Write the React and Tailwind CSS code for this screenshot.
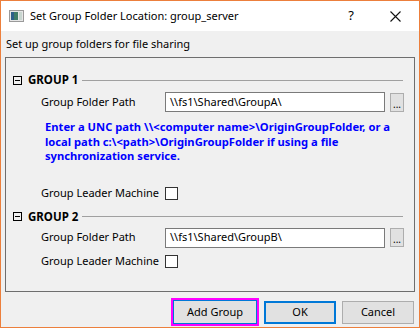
import React from "react";

function Box() {
  return (
    <div className="w-[9px] h-[9px] border border-black flex items-center justify-center mr-[6px] shrink-0">
      <div className="w-[5px] h-px bg-black" />
    </div>
  );
}

function GroupHeader({ title }) {
  return (
    <div className="flex items-center h-[14px] pl-[7px] pr-[11px]">
      <Box />
      <span className="font-bold text-[11.5px] leading-[14px] text-black whitespace-nowrap">{title}</span>
      <div className="flex-1 h-px bg-[#a0a0a0] ml-[4px]" />
    </div>
  );
}

function PathRow({ value }) {
  return (
    <div className="flex items-center h-[20px]">
      <span className="w-[124px] pl-[35px] box-content text-[11px] text-black whitespace-nowrap">Group Folder Path</span>
      <div className="w-[220px] h-[20px] border border-[#7a7a7a] bg-white flex items-center pl-[4px] text-[11px] text-black whitespace-nowrap">
        {value}
      </div>
      <div className="ml-[5px] w-[14px] h-[19px] border border-[#adadad] bg-[#e1e1e1] flex items-end justify-center text-[10px] leading-[14px] text-black">
        ...
      </div>
    </div>
  );
}

function LeaderRow() {
  return (
    <div className="flex items-center h-[14px]">
      <span className="w-[124px] pl-[35px] box-content text-[11px] text-black whitespace-nowrap">Group Leader Machine</span>
      <div className="w-[13px] h-[13px] border border-[#333] bg-white" />
    </div>
  );
}

export default function App() {
  return (
    <div
      className="w-[420px] h-[328px] border border-[#ec7f3c] flex flex-col bg-[#f0f0f0] overflow-hidden"
      style={{ fontFamily: '"Noto Sans", "Open Sans", sans-serif' }}
    >
      <div className="h-[30px] bg-white flex items-center shrink-0">
        <svg width="15" height="12" viewBox="0 0 15 12" className="ml-[8px] mr-[6px]">
          <rect x="0.5" y="0.5" width="14" height="11" fill="#e6e6e6" stroke="#9a9a9a" />
          <rect x="2" y="2" width="7" height="8" fill="#3f7c68" />
          <rect x="2" y="2" width="3" height="8" fill="#2d5f8a" />
          <rect x="10" y="2" width="3" height="8" fill="#c8d6d0" />
        </svg>
        <span className="text-[11px] text-black whitespace-nowrap">Set Group Folder Location: group_server</span>
        <span className="ml-auto mr-[36px] text-[13px] text-black">?</span>
        <svg width="11" height="11" viewBox="0 0 11 11" className="mr-[18px]">
          <path d="M0.5 0.5 L10.5 10.5 M10.5 0.5 L0.5 10.5" stroke="#111" strokeWidth="1.1" />
        </svg>
      </div>
      <div className="flex-1 flex flex-col px-[4px]">
        <div className="h-[26px] flex items-center pl-[1px] text-[11px] text-black whitespace-nowrap">
          Set up group folders for file sharing
        </div>
        <div className="h-[235px] border border-[#6e6e6e] flex flex-col pt-[15px]">
          <GroupHeader title="GROUP 1" />
          <div className="mt-[5px]"><PathRow value="\\fs1\Shared\GroupA\" /></div>
          <div className="mt-[8px] pl-[39px] text-[11.2px] leading-[14.5px] font-bold text-[#0000ff] whitespace-nowrap">
            Enter a UNC path \\&lt;computer name&gt;\OriginGroupFolder, or a
            <br />
            local path c:\&lt;path&gt;\OriginGroupFolder if using a file
            <br />
            synchronization service.
          </div>
          <div className="mt-[23px]"><LeaderRow /></div>
          <div className="mt-[9px]"><GroupHeader title="GROUP 2" /></div>
          <div className="mt-[4px]"><PathRow value="\\fs1\Shared\GroupB\" /></div>
          <div className="mt-[7px]"><LeaderRow /></div>
        </div>
        <div className="flex justify-end items-start mt-[6px] pr-[1px]">
          <div className="w-[88px] h-[28px] border-2 border-[#ff00ff] flex">
            <div className="flex-1 border border-[#0078d7] bg-[#e1e1e1] flex items-center justify-center text-[11px] text-black">
              Add Group
            </div>
          </div>
          <div className="ml-[5px] mt-[3px] w-[72px] h-[23px] border-2 border-[#0078d7] bg-[#e1e1e1] flex items-center justify-center text-[11px] text-black">
            OK
          </div>
          <div className="ml-[6px] mt-[3px] w-[72px] h-[23px] border border-[#adadad] bg-[#e1e1e1] flex items-center justify-center text-[11px] text-black">
            Cancel
          </div>
        </div>
      </div>
    </div>
  );
}
